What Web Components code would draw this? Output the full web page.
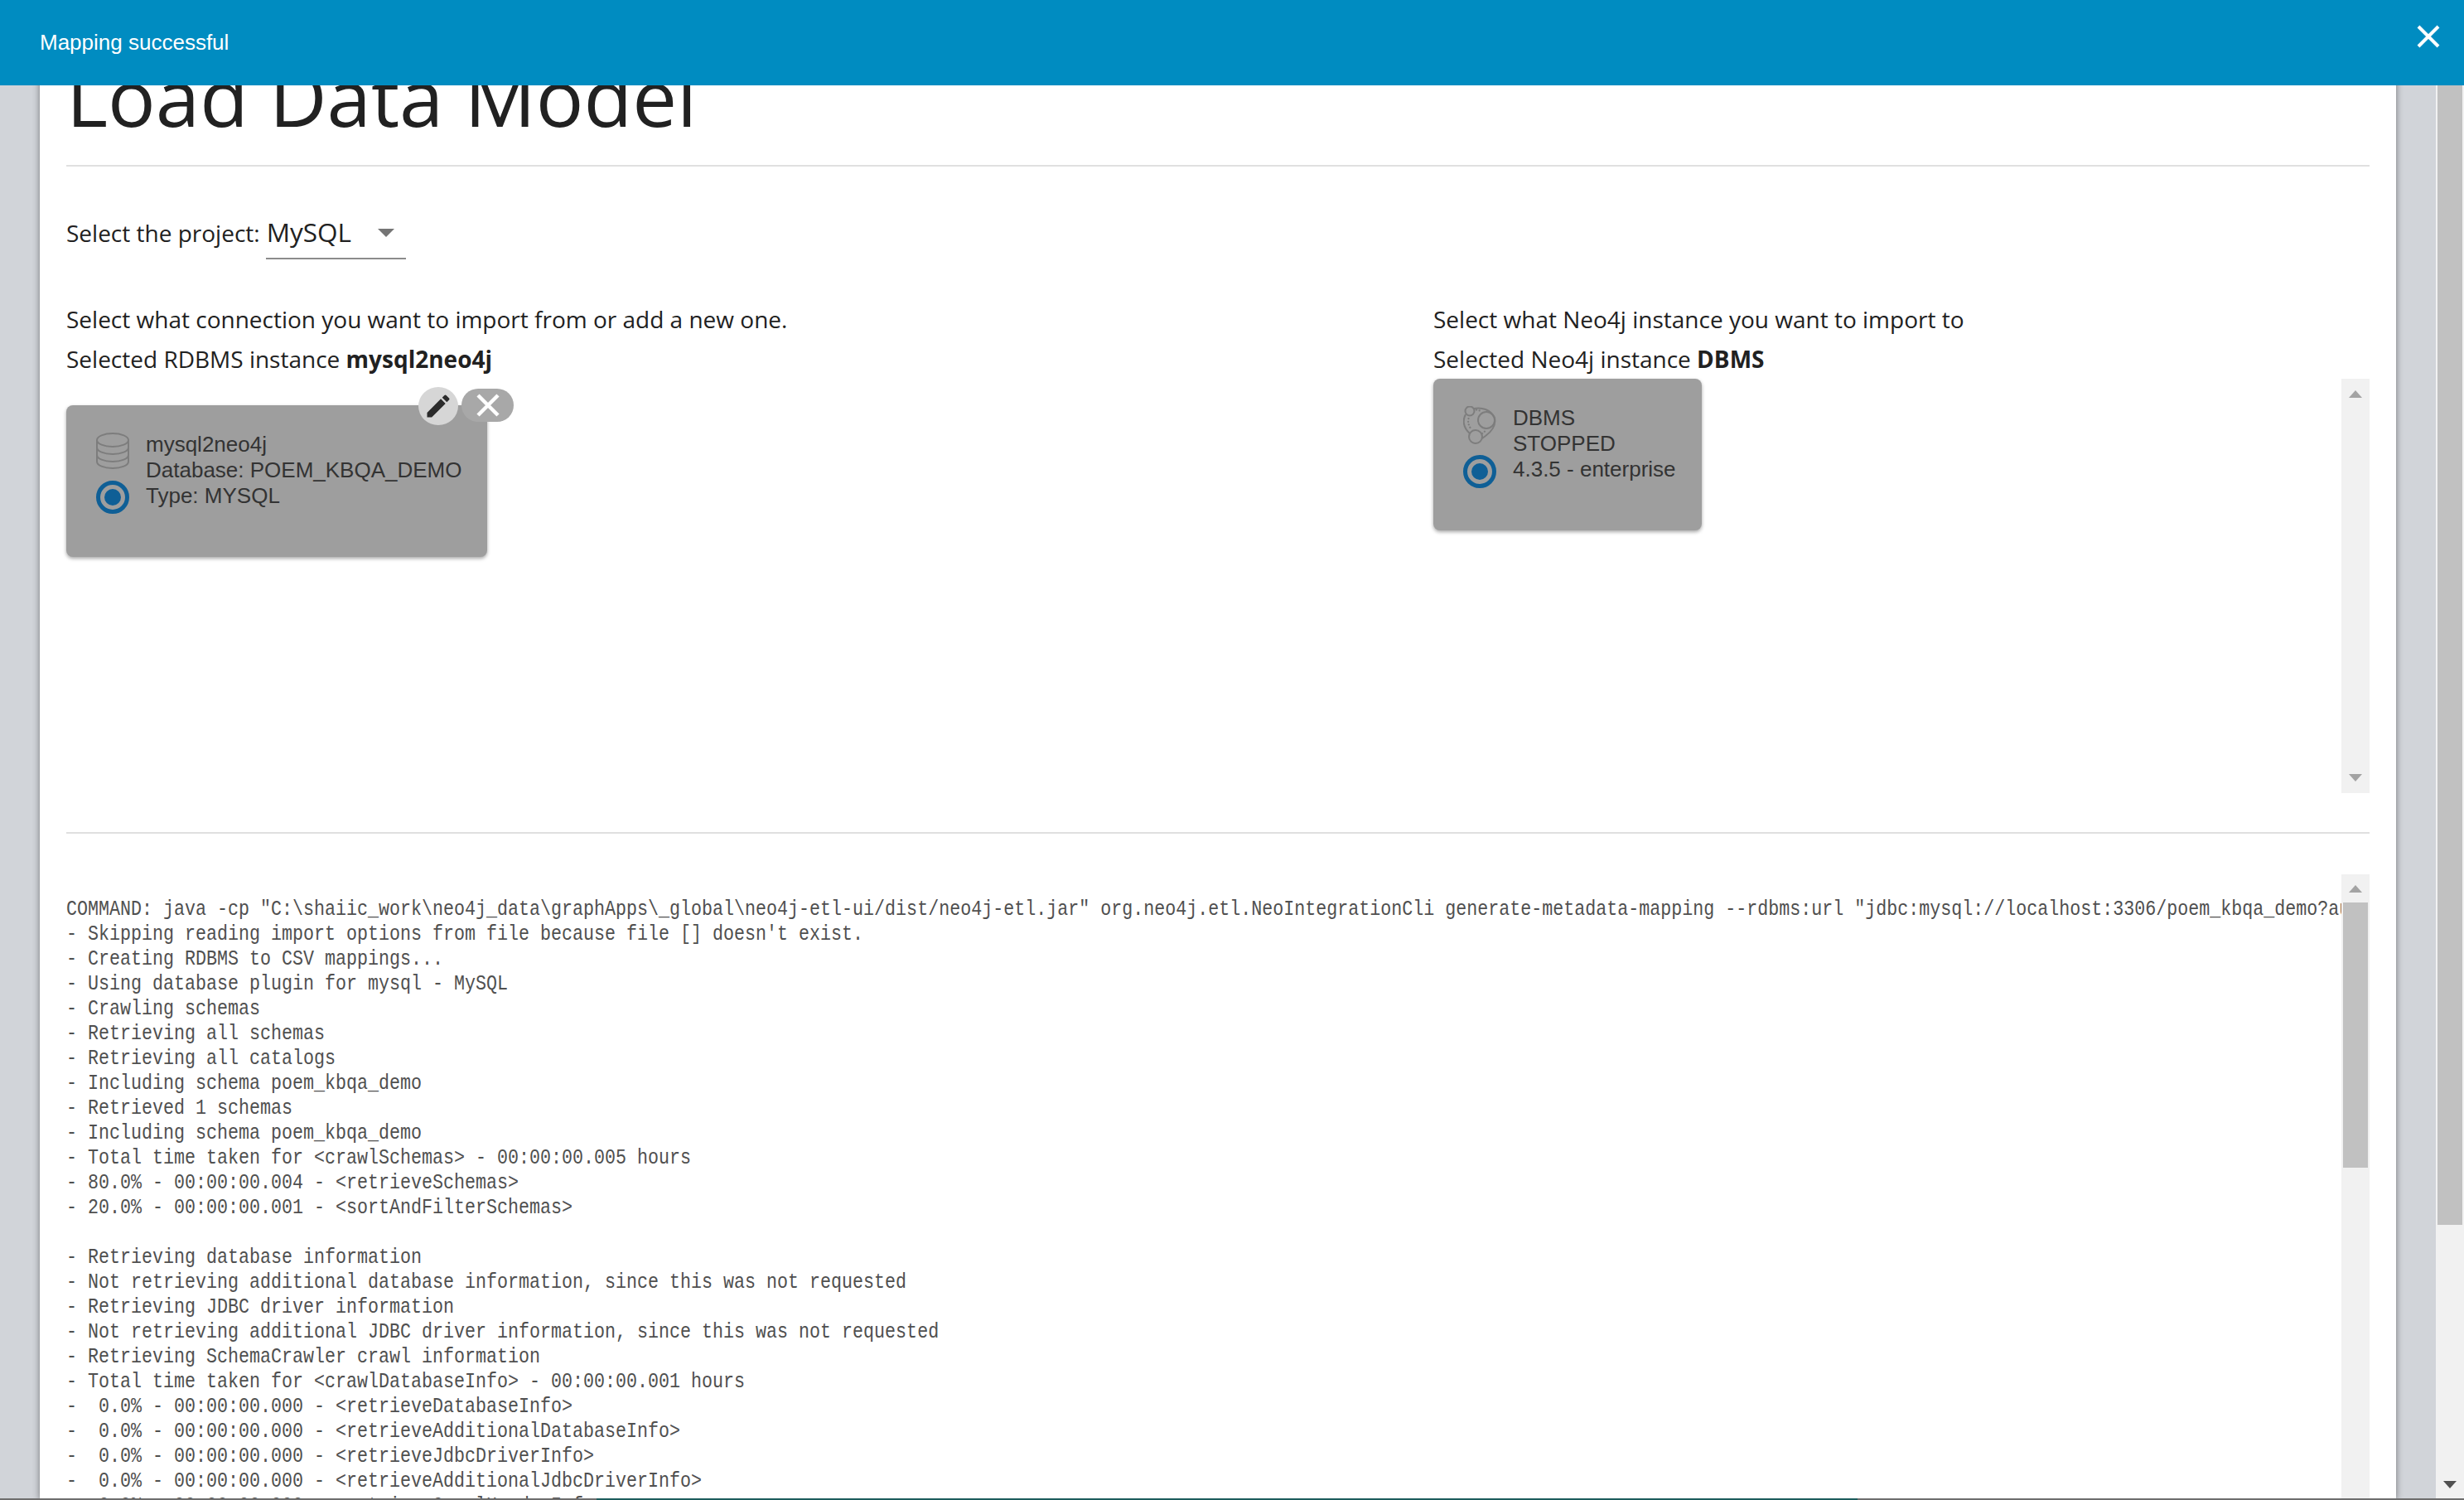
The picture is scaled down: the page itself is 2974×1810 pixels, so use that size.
<!DOCTYPE html>
<html>
<head>
<meta charset="utf-8">
<title>Load Data Model</title>
<style>
  html, body { margin: 0; height: 100%; overflow: hidden; background: #d1d4d9; }
  body { font-family: "Open Sans", sans-serif; color: #212121; }
</style>
</head>
<body>
<etl-app>
  <etl-toast slot="toast">Mapping successful</etl-toast>
  <etl-section>
    <h1-title>Load Data Model</h1-title>
    <etl-project value="MySQL"></etl-project>
    <etl-columns>
      <etl-column slot="left" line1="Select what connection you want to import from or add a new one." line2="Selected RDBMS instance" name="mysql2neo4j">
        <etl-card icon="db" actions l1="mysql2neo4j" l2="Database: POEM_KBQA_DEMO" l3="Type: MYSQL"></etl-card>
      </etl-column>
      <etl-column slot="right" line1="Select what Neo4j instance you want to import to" line2="Selected Neo4j instance" name="DBMS" flush>
        <etl-card icon="neo" l1="DBMS" l2="STOPPED" l3="4.3.5 - enterprise"></etl-card>
      </etl-column>
    </etl-columns>
    <etl-log></etl-log>
  </etl-section>
</etl-app>

<script>
const SANS = '"Liberation Sans", Arial, sans-serif'

// scrollbar, used by the page and the two panels
class EtlScrollbar extends HTMLElement {
  connectedCallback(){
    const dark = this.hasAttribute('dark')
    const arrow = dark ? '#505050' : '#a3a3a3'
    const btn = this.getAttribute('btn') || 34
    const btnEnd = this.getAttribute('btn-end') || btn
    const shadow = this.attachShadow({ mode: 'open' })
    shadow.innerHTML = `
    <style>
      :host { display: flex; flex-direction: column; width: 34px; background: #f1f1f1; flex: none; }
      .btn { flex: none; display: flex; align-items: center; justify-content: center; }
      .thumb { background: #c1c1c1; margin: 0 2px; height: ${this.getAttribute('thumb') || 0}px; flex: none; }
      .rest { flex: 1; }
      svg { display: block; }
    </style>
    <div class="btn" style="height:${btn}px"><svg width="16" height="9" viewBox="0 0 16 9"><path d="M8 0l8 9H0z" fill="${arrow}"/></svg></div>
    <div class="thumb"></div>
    <div class="rest"></div>
    <div class="btn" style="height:${btnEnd}px"><svg width="16" height="9" viewBox="0 0 16 9"><path d="M0 0h16L8 9z" fill="${arrow}"/></svg></div>`
  }
}
customElements.define('etl-scrollbar', EtlScrollbar)

class EtlApp extends HTMLElement {
  connectedCallback(){
    const shadow = this.attachShadow({ mode: 'open' })
    shadow.innerHTML = `
    <style>
      :host { display: flex; height: 1810px; width: 2974px; position: relative; overflow: hidden; background: #d1d4d9; }
      .stage { flex: 1; min-width: 0; padding: 0 48px; overflow: hidden; height: 1810px; }
      .page-bar { height: 1808px; }
      .toast { position: absolute; left: 0; right: 0; top: 0; z-index: 5; }
      /* thin strip of the window behind, at the very bottom of the shot */
      .edge { position: absolute; left: 0; right: 0; bottom: 0; height: 2px; z-index: 5;
        background: linear-gradient(90deg, #6e6e6e 720px, #1d5c5c 720px, #1d5c5c 2242px, #6e6e6e 2242px); }
    </style>
    <div class="toast"><slot name="toast"></slot></div>
    <div class="stage"><slot></slot></div>
    <etl-scrollbar class="page-bar" dark thumb="1375" btn="103" btn-end="34"></etl-scrollbar>
    <div class="edge"></div>`
  }
}
customElements.define('etl-app', EtlApp)

class EtlToast extends HTMLElement {
  connectedCallback(){
    const shadow = this.attachShadow({ mode: 'open' })
    shadow.innerHTML = `
    <style>
      :host { display: flex; align-items: center; justify-content: space-between; height: 103px; background: #008cc1; color: #fff; padding: 0 28px 0 48px; font: 26px ${SANS}; }
      svg { display: block; margin-top: -16px; }
    </style>
    <slot></slot>
    <svg width="30" height="30" viewBox="0 0 30 30"><path d="M3 3l24 24M27 3L3 27" stroke="#fff" stroke-width="4" fill="none"/></svg>`
  }
}
customElements.define('etl-toast', EtlToast)

// white modal body, its top is cut because the page is scrolled a little
class EtlSection extends HTMLElement {
  connectedCallback(){
    const shadow = this.attachShadow({ mode: 'open' })
    shadow.innerHTML = `
    <style>
      :host { display: block; background: #fff; box-shadow: 0 0 8px rgba(0,0,0,.45); padding: 0 32px; height: 1810px; box-sizing: border-box; overflow: hidden; }
    </style>
    <slot></slot>`
  }
}
customElements.define('etl-section', EtlSection)

class H1Title extends HTMLElement {
  connectedCallback(){
    const shadow = this.attachShadow({ mode: 'open' })
    shadow.innerHTML = `
    <style>
      :host { display: block; height: 199px; border-bottom: 2px solid #e0e0e0; }
      h1 { margin: 0; font: 400 96px/130px "Open Sans", sans-serif; color: #212121; padding-top: 51px; }
    </style>
    <h1><slot></slot></h1>`
  }
}
customElements.define('h1-title', H1Title)

class EtlProject extends HTMLElement {
  connectedCallback(){
    const shadow = this.attachShadow({ mode: 'open' })
    shadow.innerHTML = `
    <style>
      :host { display: flex; align-items: flex-start; height: 110px; padding-top: 50px; font: 28px/60px "Open Sans", sans-serif; }
      .label { margin-right: 7px; }
      .select { width: 169px; height: 62px; border-bottom: 2px solid #8c8c8c; display: flex; justify-content: space-between; align-items: center; font-size: 31.5px; padding: 0 14px 0 1px; box-sizing: border-box; }
      .select span { line-height: 58px; align-self: flex-start; }
      svg { display: block; }
    </style>
    <span class="label">Select the project:</span>
    <div class="select"><span>${this.getAttribute('value')}</span><svg width="20" height="10" viewBox="0 0 20 10"><path d="M0 0h20L10 10z" fill="#757575"/></svg></div>`
  }
}
customElements.define('etl-project', EtlProject)

class EtlColumns extends HTMLElement {
  connectedCallback(){
    const shadow = this.attachShadow({ mode: 'open' })
    shadow.innerHTML = `
    <style>
      :host { display: flex; height: 643px; border-bottom: 2px solid #e0e0e0; }
      .left { width: 1650px; flex: none; }
      .right { flex: 1; min-width: 0; display: flex; }
      .right ::slotted(*) { flex: 1; }
    </style>
    <div class="left"><slot name="left"></slot></div>
    <div class="right"><slot name="right"></slot></div>`
  }
}
customElements.define('etl-columns', EtlColumns)

class EtlColumn extends HTMLElement {
  connectedCallback(){
    const flush = this.hasAttribute('flush')
    const shadow = this.attachShadow({ mode: 'open' })
    shadow.innerHTML = `
    <style>
      :host { display: block; font: 28px/48px "Open Sans", sans-serif; }
      .cards { display: flex; align-items: flex-start; margin-top: 32px; }
      b { font-weight: 700; }
      .wrap { display: flex; height: 500px; }
      .main { flex: 1; }
    </style>
    <div>${this.getAttribute('line1')}</div>
    <div>${this.getAttribute('line2')} <b>${this.getAttribute('name')}</b></div>
    ${flush
      ? `<div class="wrap"><div class="main"><slot></slot></div><etl-scrollbar btn="37"></etl-scrollbar></div>`
      : `<div class="cards"><slot></slot></div>`}`
  }
}
customElements.define('etl-column', EtlColumn)

class EtlCard extends HTMLElement {
  connectedCallback(){
    const db = `<svg width="40" height="44" viewBox="0 0 40 44" fill="none" stroke="#7d7d7d" stroke-width="2"><ellipse cx="20" cy="9" rx="19" ry="8"/><path d="M1 9v26c0 4.500 8.500 8 19 8s19-3.500 19-8V9M1 18c0 4.500 8.500 8 19 8s19-3.500 19-8M1 27c0 4.500 8.500 8 19 8s19-3.500 19-8"/></svg>`
    const neo = `<svg class="neo" width="40" height="46" viewBox="0 0 40 46" fill="none" stroke="#7d7d7d" stroke-width="2"><circle cx="8" cy="6" r="5.500"/><circle cx="28" cy="17" r="10"/><circle cx="15" cy="37" r="8"/><path d="M13 3C22 1 33 4 38 14c2 9-4 17-11 22l-4 3M3 10C-1 17 0 26 8 33"/><path d="M6.500 15c-1 4 0 8 2 11M16 4.500l6 1.500M23 33l5-4" stroke-width="2.200" stroke-linecap="round" stroke-dasharray=".1 3.600"/></svg>`
    const shadow = this.attachShadow({ mode: 'open' })
    shadow.innerHTML = `
    <style>
      :host { display: inline-block; position: relative; }
      .card { display: flex; gap: 20px; background: #9e9e9e; border-radius: 8px; box-shadow: 0 2px 4px rgba(0,0,0,.35); padding: 32px 31px 66px 36px; color: #333; font: 26px/31px ${SANS}; height: 85px; }
      .icons { display: flex; flex-direction: column; gap: 13px; width: 40px; align-items: center; padding-top: 1px; }
      .neo { margin: 0 0 -1px; }
      .radio { width: 40px; height: 40px; box-sizing: border-box; border: 5px solid #0f5f96; border-radius: 50%; display: flex; align-items: center; justify-content: center; flex: none; margin-top: 1px; }
      .radio i { display: block; width: 20px; height: 20px; border-radius: 50%; background: #0f5f96; }
      svg { display: block; flex: none; }
      .edit, .del { position: absolute; display: flex; align-items: center; justify-content: center; }
      .edit { left: 425px; top: -22px; width: 48px; height: 46px; border-radius: 50%; background: #d6d6d6; z-index: 2; }
      .del { left: 477px; top: -20px; width: 63px; height: 40px; border-radius: 20px; background: #a8a8a8; }
    </style>
    <div class="card">
      <div class="icons">${this.getAttribute('icon') === 'db' ? db : neo}<div class="radio"><i></i></div></div>
      <div class="text"><div>${this.getAttribute('l1')}</div><div>${this.getAttribute('l2')}</div><div>${this.getAttribute('l3')}</div></div>
    </div>
    ${this.hasAttribute('actions') ? `
    <div class="edit"><svg width="36" height="36" viewBox="0 0 24 24"><path fill="#2b2b2b" d="M3 17.250V21h3.750L17.810 9.940l-3.750-3.750L3 17.250zM20.710 7.040a1 1 0 0 0 0-1.410l-2.340-2.340a1 1 0 0 0-1.410 0l-1.830 1.830 3.750 3.750 1.830-1.830z"/></svg></div>
    <div class="del"><svg width="30" height="30" viewBox="0 0 30 30"><path d="M3 3l24 24M27 3L3 27" stroke="#fff" stroke-width="4.500" fill="none"/></svg></div>` : ''}`
  }
}
customElements.define('etl-card', EtlCard)

const LOG = [
  'COMMAND: java -cp "C:\\shaiic_work\\neo4j_data\\graphApps\\_global\\neo4j-etl-ui/dist/neo4j-etl.jar" org.neo4j.etl.NeoIntegrationCli generate-metadata-mapping --rdbms:url "jdbc:mysql://localhost:3306/poem_kbqa_demo?autoReconnect=true',
  "- Skipping reading import options from file because file [] doesn't exist.",
  '- Creating RDBMS to CSV mappings...',
  '- Using database plugin for mysql - MySQL',
  '- Crawling schemas',
  '- Retrieving all schemas',
  '- Retrieving all catalogs',
  '- Including schema poem_kbqa_demo',
  '- Retrieved 1 schemas',
  '- Including schema poem_kbqa_demo',
  '- Total time taken for <crawlSchemas> - 00:00:00.005 hours',
  '- 80.0% - 00:00:00.004 - <retrieveSchemas>',
  '- 20.0% - 00:00:00.001 - <sortAndFilterSchemas>',
  '',
  '- Retrieving database information',
  '- Not retrieving additional database information, since this was not requested',
  '- Retrieving JDBC driver information',
  '- Not retrieving additional JDBC driver information, since this was not requested',
  '- Retrieving SchemaCrawler crawl information',
  '- Total time taken for <crawlDatabaseInfo> - 00:00:00.001 hours',
  '-  0.0% - 00:00:00.000 - <retrieveDatabaseInfo>',
  '-  0.0% - 00:00:00.000 - <retrieveAdditionalDatabaseInfo>',
  '-  0.0% - 00:00:00.000 - <retrieveJdbcDriverInfo>',
  '-  0.0% - 00:00:00.000 - <retrieveAdditionalJdbcDriverInfo>',
  '-  0.0% - 00:00:00.000 - <retrieveCrawlHeaderInfo>'
]

class EtlLog extends HTMLElement {
  connectedCallback(){
    const shadow = this.attachShadow({ mode: 'open' })
    shadow.innerHTML = `
    <style>
      :host { display: flex; margin-top: 49px; height: 800px; }
      .out { flex: 1; min-width: 0; overflow: hidden; padding-top: 27px; }
      pre { margin: 0; font: 26px/30px "Liberation Mono", monospace; color: #505050; transform: scaleX(.8333); transform-origin: 0 0; }
    </style>
    <div class="out"><pre></pre></div>
    <etl-scrollbar thumb="320"></etl-scrollbar>`
    shadow.querySelector('pre').textContent = LOG.join('\n')
  }
}
customElements.define('etl-log', EtlLog)
</script>
</body>
</html>
